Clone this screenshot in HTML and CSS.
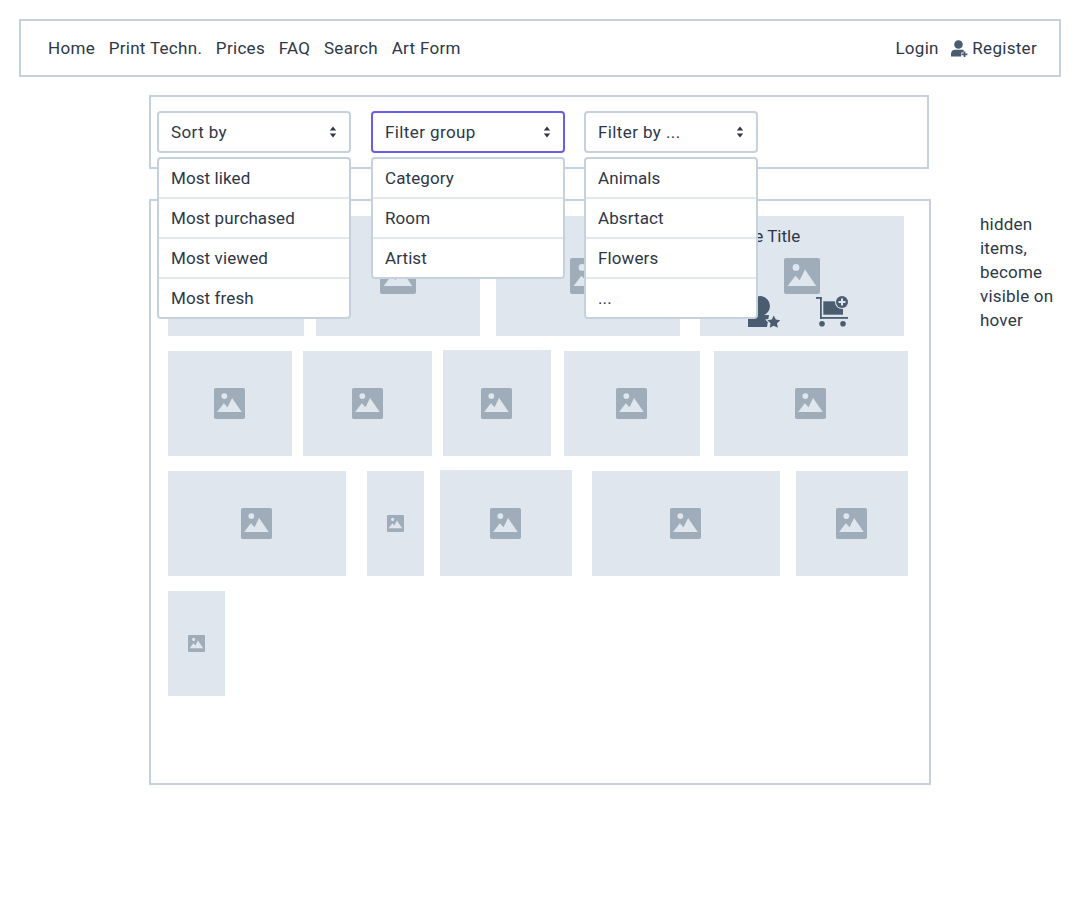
FILE: index.html
```html
<!DOCTYPE html>
<html lang="en">
<head>
    <meta charset="UTF-8">
    <meta name="viewport" content="width=device-width, initial-scale=1.0">
    <title>Art Prints</title>
    <link rel="stylesheet" href="styles.css">
</head>
<body>
    <svg class="sprites" width="0" height="0" aria-hidden="true">
        <symbol id="picture" viewBox="0 0 36 36">
            <path fill-rule="evenodd" d="M2 0h32a2 2 0 0 1 2 2v32a2 2 0 0 1-2 2H2a2 2 0 0 1-2-2V2a2 2 0 0 1 2-2zM12 6a3.4 3.4 0 1 0 0 6.800A3.4 3.4 0 0 0 12 6zM3.600 28h28.600L21 11.500l-5.300 10.800-4.300-4.600z"/>
        </symbol>
        <symbol id="arrows" viewBox="0 0 8 12">
            <path d="M4 0.500L7.200 4.400H0.800zM4 11.500L0.800 7.600H7.200z"/>
        </symbol>
    </svg>

    <nav class="topbar">
        <div class="links">
            <a>Home</a>
            <a>Print Techn.</a>
            <a>Prices</a>
            <a>FAQ</a>
            <a>Search</a>
            <a>Art Form</a>
        </div>
        <div class="links account">
            <a>Login</a>
            <a class="register">
                <svg class="user-plus" viewBox="0 0 17 17">
                    <circle cx="7.500" cy="4.500" r="4.300"/>
                    <path d="M0 16.500v-2.700c0-2.400 2-4 4-4h7c0.600 0 1.100 0.100 1.600 0.300v2.400h-2.400v4z"/>
                    <path d="M12.600 11.500h1.800v2h2v1.800h-2v2h-1.800v-2h-2v-1.800h2z"/>
                </svg>
                Register
            </a>
        </div>
    </nav>

    <div class="stage">
        <div class="main">
            <section class="filters">
                <div class="dropdown">
                    <div class="select">Sort by <svg class="arrows"><use href="#arrows"/></svg></div>
                    <ul class="menu">
                        <li>Most liked</li>
                        <li>Most purchased</li>
                        <li>Most viewed</li>
                        <li>Most fresh</li>
                    </ul>
                </div>
                <div class="dropdown">
                    <div class="select focused">Filter group <svg class="arrows"><use href="#arrows"/></svg></div>
                    <ul class="menu">
                        <li>Category</li>
                        <li>Room</li>
                        <li>Artist</li>
                    </ul>
                </div>
                <div class="dropdown narrow">
                    <div class="select">Filter by ... <svg class="arrows"><use href="#arrows"/></svg></div>
                    <ul class="menu">
                        <li>Animals</li>
                        <li>Absrtact</li>
                        <li>Flowers</li>
                        <li>...</li>
                    </ul>
                </div>
            </section>

            <section class="gallery">
                <div class="row row-1">
                    <div class="tile"><svg class="pic big"><use href="#picture"/></svg></div>
                    <div class="tile"><svg class="pic big"><use href="#picture"/></svg></div>
                    <div class="tile"><svg class="pic big"><use href="#picture"/></svg></div>
                    <div class="tile hovered">
                        <span class="tile-title">Image Title</span>
                        <svg class="pic big"><use href="#picture"/></svg>
                        <div class="tile-actions">
                            <svg class="action" viewBox="0 0 34 33">
                                <circle cx="13" cy="11" r="10"/>
                                <path d="M1 32v-8c0-2.500 1.500-4 4-4h17l-2 12z"/>
                                <path class="ring" d="M26.800 20.500l2 4 4.500 0.650-3.250 3.150 0.770 4.500-4.020-2.100-4.020 2.100 0.770-4.500-3.250-3.150 4.500-0.650z"/>
                            </svg>
                            <svg class="action" viewBox="0 0 34 33">
                                <path d="M1 2h5.700v1.800H1z"/>
                                <path d="M5 2h1.800v22H5z"/>
                                <path d="M5 22h28v1.800H5z"/>
                                <path d="M8.300 6.300h19.700v13.400H8.300z"/>
                                <circle cx="7" cy="28.700" r="2.800"/>
                                <circle cx="28" cy="28.700" r="2.800"/>
                                <circle class="cut" cx="27" cy="7" r="7"/>
                                <circle cx="27" cy="7" r="6"/>
                                <path class="cut" d="M26 3.500h2v2.500h2.500v2h-2.500v2.500h-2V8h-2.500V6H26z"/>
                            </svg>
                        </div>
                    </div>
                </div>
                <div class="row row-2">
                    <div class="tile"><svg class="pic"><use href="#picture"/></svg></div>
                    <div class="tile"><svg class="pic"><use href="#picture"/></svg></div>
                    <div class="tile"><svg class="pic"><use href="#picture"/></svg></div>
                    <div class="tile"><svg class="pic"><use href="#picture"/></svg></div>
                    <div class="tile"><svg class="pic"><use href="#picture"/></svg></div>
                </div>
                <div class="row row-3">
                    <div class="tile"><svg class="pic"><use href="#picture"/></svg></div>
                    <div class="tile"><svg class="pic small"><use href="#picture"/></svg></div>
                    <div class="tile"><svg class="pic"><use href="#picture"/></svg></div>
                    <div class="tile"><svg class="pic"><use href="#picture"/></svg></div>
                    <div class="tile"><svg class="pic"><use href="#picture"/></svg></div>
                </div>
                <div class="row row-4">
                    <div class="tile"><svg class="pic small"><use href="#picture"/></svg></div>
                </div>
            </section>
        </div>
        <p class="note">hidden items, become visible on hover</p>
    </div>
</body>
</html>
```

FILE: styles.css
```css
* {
    box-sizing: border-box;
}

body {
    margin: 0;
    padding: 19px 19px 0;
    font-family: Roboto, "Liberation Sans", sans-serif;
    font-size: 17px;
    line-height: 24px;
    color: #2d3748;
    background: #fff;
}

.sprites {
    position: absolute;
}

/* top navigation */
.topbar {
    display: flex;
    justify-content: space-between;
    align-items: center;
    height: 58px;
    padding: 0 22px 0 27px;
    border: 2px solid #c5d1dc;
    letter-spacing: 0.3px;
}

.links {
    display: flex;
    gap: 13.7px;
}

.account {
    gap: 12.5px;
}

.register {
    display: flex;
    align-items: center;
    gap: 4px;
}

.user-plus {
    width: 17px;
    height: 17px;
    fill: #4a5d70;
}

/* filters and gallery */
.stage {
    display: flex;
    margin-top: 18px;
    padding-left: 130px;
}

.main {
    width: 782px;
}

.filters {
    display: flex;
    gap: 20px;
    width: 780px;
    height: 74px;
    padding: 14px 6px;
    border: 2px solid #c5d1dc;
}

.dropdown {
    position: relative;
    width: 194px;
}

.dropdown.narrow {
    width: 174px;
    margin-left: -1px;
}

.select {
    display: flex;
    justify-content: space-between;
    align-items: center;
    height: 42px;
    padding: 0 12px;
    border: 2px solid #c5d1dc;
    border-radius: 4px;
    background: #fff;
    letter-spacing: 0.4px;
}

.select.focused {
    border-color: #6b5ce7;
}

.arrows {
    width: 8px;
    height: 12px;
    fill: #2d3748;
}

.menu {
    position: absolute;
    top: 46px;
    left: 0;
    z-index: 2;
    width: 100%;
    margin: 0;
    padding: 0;
    list-style: none;
    background: #fff;
    border: 2px solid #c5d1dc;
    border-radius: 4px;
    letter-spacing: 0.1px;
}

.menu li {
    height: 38px;
    padding: 0 12px;
    line-height: 38px;
}

.menu li + li {
    height: 40px;
    border-top: 2px solid #e2e8f0;
}

.gallery {
    height: 586px;
    margin-top: 30px;
    padding: 15px 0 0 17px;
    border: 2px solid #c5d1dc;
}

.row {
    display: flex;
    align-items: flex-end;
    height: 105px;
    margin-bottom: 15px;
}

.row-1 {
    height: 120px;
}

.tile {
    position: relative;
    display: flex;
    justify-content: center;
    align-items: center;
    flex: none;
    height: 100%;
    background: #dfe6ee;
}

.row-1 .tile:nth-child(1) { width: 136px; }
.row-1 .tile:nth-child(2) { width: 164px; margin-left: 12px; }
.row-1 .tile:nth-child(3) { width: 184px; margin-left: 16px; }
.row-1 .tile:nth-child(4) { width: 204px; margin-left: 20px; }

.row-2 .tile:nth-child(1) { width: 124px; }
.row-2 .tile:nth-child(2) { width: 129px; margin-left: 11px; }
.row-2 .tile:nth-child(3) { width: 108px; margin-left: 11px; height: 106px; }
.row-2 .tile:nth-child(4) { width: 136px; margin-left: 13px; }
.row-2 .tile:nth-child(5) { width: 194px; margin-left: 14px; }

.row-3 .tile:nth-child(1) { width: 178px; }
.row-3 .tile:nth-child(2) { width: 57px; margin-left: 21px; }
.row-3 .tile:nth-child(3) { width: 132px; margin-left: 16px; height: 106px; }
.row-3 .tile:nth-child(4) { width: 188px; margin-left: 20px; }
.row-3 .tile:nth-child(5) { width: 112px; margin-left: 16px; }

.row-4 .tile { width: 57px; }

.pic {
    width: 31px;
    height: 31px;
    margin-right: 1px;
    fill: #9fadba;
}

.pic.big {
    width: 36px;
    height: 36px;
    margin-right: 0;
}

.pic.small {
    width: 17px;
    height: 17px;
    margin-right: 0;
}

/* shown on hover only */
.tile-title {
    position: absolute;
    top: 8px;
    left: 16px;
}

.tile-actions {
    position: absolute;
    top: 79px;
    left: 47px;
    display: flex;
    gap: 34px;
}

.action {
    width: 34px;
    height: 33px;
    fill: #4a5d70;
}

.action .cut {
    fill: #dfe6ee;
}

.action .ring {
    stroke: #dfe6ee;
    stroke-width: 2px;
    paint-order: stroke;
}

.note {
    width: 80px;
    margin: 117px 0 0 49px;
    letter-spacing: 0.2px;
}
```
